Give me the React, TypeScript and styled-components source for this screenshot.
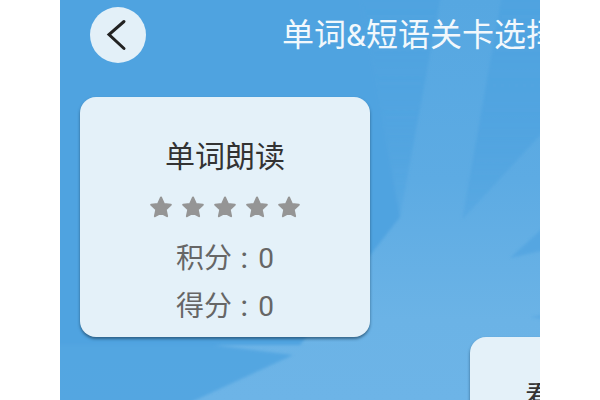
import { FC } from "react";
import styled, { createGlobalStyle } from "styled-components";

const GlobalStyle = createGlobalStyle`
  html, body {
    margin: 0;
    padding: 0;
    background: #fff;
    font-family: Roboto, "Noto Sans CJK SC", sans-serif;
  }
`;

const rays = `<svg xmlns='http://www.w3.org/2000/svg' width='480' height='400'><defs><filter id='b' x='-5%' y='-5%' width='110%' height='110%'><feGaussianBlur stdDeviation='1.6'/></filter><linearGradient id='f' x1='0' y1='0' x2='0' y2='1'><stop offset='0' stop-color='#4fa3e0'/><stop offset='.6' stop-color='#4fa3e0' stop-opacity='.8'/><stop offset='1' stop-color='#4fa3e0' stop-opacity='.45'/></linearGradient></defs><g filter='url(#b)'><polygon fill='url(#f)' points='340,217 300,-5 381,-5'/><polygon fill='url(#f)' points='402,220 442,-5 485,-5 485,130'/><polygon fill='#4fa3e0' opacity='.7' points='450,258 485,226 485,250'/><polygon fill='#4fa3e0' opacity='.5' points='470,317 485,314 485,320'/><polygon fill='#4fa3e0' opacity='.85' points='233,355 -5,325 -5,405 125,405'/><polygon fill='#4fa3e0' points='-5,-5 300,-5 340,217 240,345 -5,345'/></g></svg>`;

const Screen = styled.div`
  width: 480px;
  height: 400px;
  margin: 0 auto;
  overflow: hidden;
  background-color: #5fabe3;
  background-image: url("data:image/svg+xml,${encodeURIComponent(rays)}"),
    linear-gradient(180deg, #56a7e1 0%, #5dabe3 45%, #6bb3e6 80%, #6db4e7 100%);
`;

const Header = styled.header`
  height: 70px;
  padding: 7px 0 0 30px;
  box-sizing: border-box;
  display: flex;
  align-items: flex-start;
  gap: 136px;
`;

const BackButton = styled.button`
  width: 56px;
  height: 56px;
  flex: none;
  padding: 0;
  border: 0;
  border-radius: 50%;
  background: #e3f0f8;
  display: flex;
  align-items: center;
  justify-content: center;
`;

const Title = styled.h1`
  margin: 10px 0 0;
  font-size: 32px;
  line-height: 36px;
  font-weight: 400;
  color: #f2f8fc;
  white-space: nowrap;
`;

const Levels = styled.div`
  padding: 27px 0 0 20px;
  display: flex;
  flex-direction: column;
`;

const Card = styled.section<{ $indent?: number }>`
  width: 290px;
  height: 240px;
  flex: none;
  box-sizing: border-box;
  margin-left: ${(p) => p.$indent ?? 0}px;
  padding-top: 39px;
  border-radius: 16px;
  background: #e4f1f9;
  box-shadow: 0 2px 3px rgba(30, 70, 100, 0.7);
  display: flex;
  flex-direction: column;
  align-items: center;
`;

const CardTitle = styled.h2`
  margin: 0;
  font-size: 30px;
  line-height: 42px;
  font-weight: 400;
  color: #333;
  white-space: nowrap;
`;

const Stars = styled.div`
  margin-top: 13px;
  height: 32px;
  display: flex;
  align-items: center;
  gap: 8px;
`;

const Stat = styled.div<{ $first?: boolean }>`
  margin-top: ${(p) => (p.$first ? 16 : 8)}px;
  height: 40px;
  display: flex;
  align-items: center;
  font-size: 28px;
  line-height: 40px;
  color: #666;
  white-space: nowrap;
`;

const Colon = styled.span`
  margin-right: 2px;
  font-size: 24px;
  font-family: "Noto Sans CJK TC", sans-serif;
`;

const Star: FC = () => (
  <svg width="24" height="24" viewBox="0 0 24 24">
    <path
      d="M12 2.5 L14.9 8.9 L21.8 9.7 L16.7 14.4 L18.1 21.2 L12 17.8 L5.9 21.2 L7.3 14.4 L2.2 9.7 L9.1 8.9 Z"
      fill="#959595"
      stroke="#959595"
      strokeWidth="2"
      strokeLinejoin="round"
    />
  </svg>
);

const LevelCard: FC<{ title: string; indent?: number }> = ({ title, indent }) => (
  <Card $indent={indent}>
    <CardTitle>{title}</CardTitle>
    <Stars>
      {[0, 1, 2, 3, 4].map((i) => (
        <Star key={i} />
      ))}
    </Stars>
    <Stat $first>
      <span>积分</span>
      <Colon>：</Colon>
      <span>0</span>
    </Stat>
    <Stat>
      <span>得分</span>
      <Colon>：</Colon>
      <span>0</span>
    </Stat>
  </Card>
);

export default function App() {
  return (
    <>
      <GlobalStyle />
      <Screen>
        <Header>
          <BackButton aria-label="返回">
            <svg width="56" height="56" viewBox="0 0 56 56" fill="none">
              <path d="M34 14.5 L19 27.5 L34 41.5" stroke="#222" strokeWidth="3" strokeLinecap="round" strokeLinejoin="miter" />
            </svg>
          </BackButton>
          <Title>单词&短语关卡选择</Title>
        </Header>
        <Levels>
          <LevelCard title="单词朗读" />
          <LevelCard title="看单词选释义" indent={390} />
        </Levels>
      </Screen>
    </>
  );
}
